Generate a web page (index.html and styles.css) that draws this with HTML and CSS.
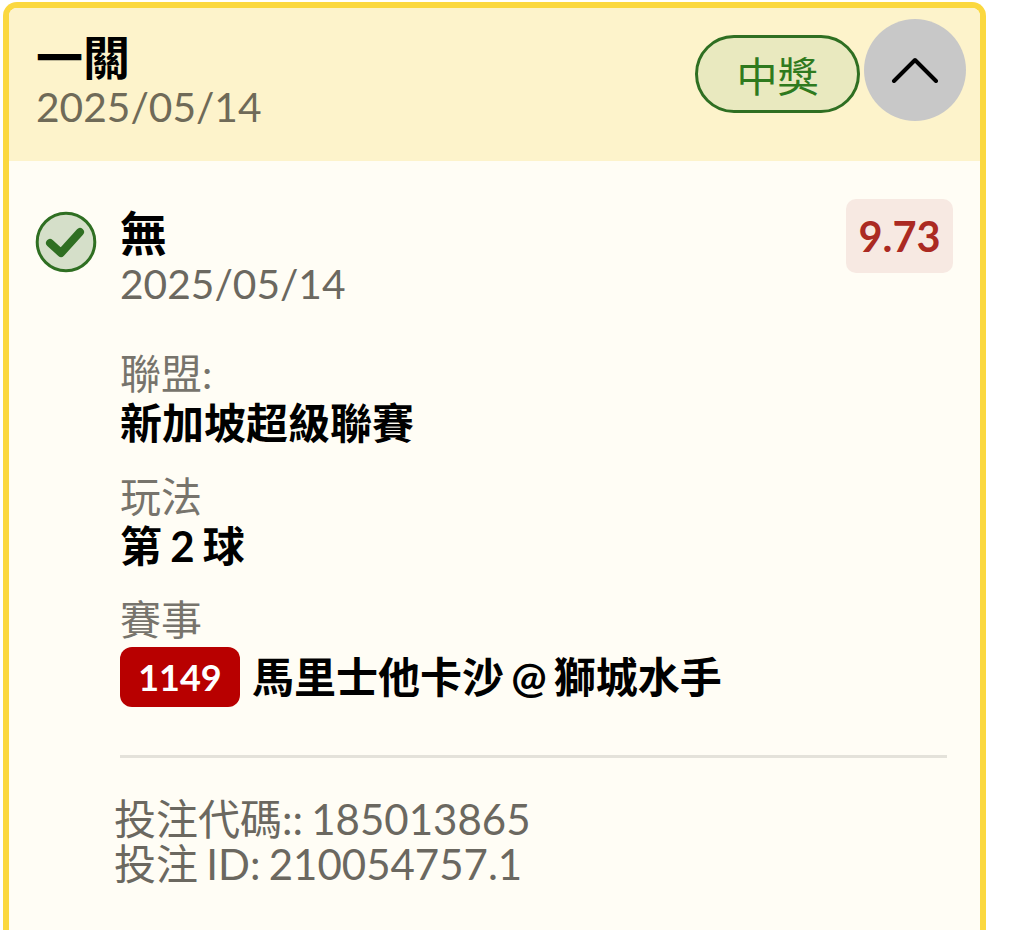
FILE: index.html
```html
<!DOCTYPE html>
<html lang="zh-Hant">
<head>
    <meta charset="UTF-8">
    <meta name="viewport" content="width=device-width, initial-scale=1.0">
    <title>一關</title>
    <link rel="stylesheet" href="styles.css">
</head>
<body>

    <div class="card">
        <div class="card-head">
            <div class="head-text">
                <div class="head-title">一關</div>
                <div class="head-date">2025/05/14</div>
            </div>
            <div class="head-actions">
                <span class="status">中獎</span>
                <button class="toggle" aria-label="收起">
                    <svg width="48" height="28" viewBox="0 0 48 28"><path d="M3 26 L24 5 L45 26" fill="none" stroke="#000" stroke-width="4" stroke-linecap="round" stroke-linejoin="round"/></svg>
                </button>
            </div>
        </div>

        <div class="card-body">
            <div class="pick">
                <svg class="check" width="62" height="62" viewBox="0 0 62 62">
                    <circle cx="31" cy="31" r="28.8" fill="#d5dfc9" stroke="#2f6f22" stroke-width="3"/>
                    <path d="M15 32 L26 42 L45 21" fill="none" stroke="#2f6f22" stroke-width="8" stroke-linecap="round" stroke-linejoin="round"/>
                </svg>
                <div class="pick-main">
                    <div class="pick-title">無</div>
                    <div class="pick-date">2025/05/14</div>

                    <div class="field first">
                        <div class="field-label">聯盟:</div>
                        <div class="field-value">新加坡超級聯賽</div>
                    </div>
                    <div class="field">
                        <div class="field-label">玩法</div>
                        <div class="field-value">第 2 球</div>
                    </div>
                    <div class="field">
                        <div class="field-label">賽事</div>
                        <div class="match">
                            <span class="match-no">1149</span>
                            <span class="field-value">馬里士他卡沙 @ 獅城水手</span>
                        </div>
                    </div>
                </div>
                <div class="odds">9.73</div>
            </div>

            <hr class="divider">

            <div class="codes">
                <div>投注代碼:: 185013865</div>
                <div>投注 ID: 210054757.1</div>
            </div>
        </div>
    </div>

</body>
</html>
```

FILE: styles.css
```css
html, body {
    height: 100%;
    overflow: hidden;
}
body {
    margin: 0;
    background: #fff;
    font-family: Lato, "Noto Sans CJK TC", sans-serif;
}
.card {
    box-sizing: border-box;
    width: 983px;
    height: 928px;
    margin: 2px 0 0 3px;
    border: 6px solid #fbd83f;
    border-bottom: none;
    border-radius: 14px 14px 0 0;
    background: #fffdf5;
    overflow: hidden;
}
.card-head {
    display: flex;
    justify-content: space-between;
    height: 153px;
    padding: 0 14px 0 27px;
    box-sizing: border-box;
    background: #fdf3cb;
}
.head-text {
    padding-top: 22px;
}
.head-title {
    font-size: 47px;
    font-weight: 700;
    line-height: 54px;
    color: #000;
}
.head-date {
    font-size: 40.7px;
    line-height: 46px;
    color: #6f6a58;
}
.head-actions {
    display: flex;
    align-items: flex-start;
    gap: 4px;
    padding-top: 12px;
}
.status {
    display: flex;
    align-items: center;
    justify-content: center;
    box-sizing: border-box;
    width: 165px;
    height: 78px;
    margin-top: 15px;
    border: 3px solid #2f6f22;
    border-radius: 39px;
    background: #e9e9bf;
    color: #2f7a1e;
    font-size: 41px;
}
.toggle {
    display: flex;
    align-items: center;
    justify-content: center;
    width: 102px;
    height: 102px;
    margin: -1px 0 0;
    padding: 0 0 2px;
    border: none;
    border-radius: 50%;
    background: #c8c8c8;
    cursor: pointer;
}
.card-body {
    padding: 38px 27px 0 26px;
}
.pick {
    display: flex;
    align-items: flex-start;
}
.check {
    flex: none;
    margin: 12px 23px 0 0;
}
.pick-main {
    flex: 1;
    padding-top: 7px;
}
.pick-title {
    font-size: 47px;
    font-weight: 700;
    line-height: 54px;
    color: #000;
}
.pick-date {
    font-size: 40.7px;
    line-height: 47px;
    color: #6b6860;
}
.field {
    margin-top: 24px;
}
.field.first {
    margin-top: 42px;
}
.field-label {
    font-size: 41px;
    line-height: 49px;
    color: #77746c;
}
.field-value {
    font-size: 42px;
    font-weight: 700;
    line-height: 50px;
    word-spacing: -2px;
    color: #000;
}
.match {
    display: flex;
    align-items: center;
    gap: 12px;
    margin-top: 3px;
}
.match .field-value {
    word-spacing: -3px;
}
.match-no {
    display: flex;
    align-items: center;
    justify-content: center;
    width: 120px;
    height: 60px;
    border-radius: 12px;
    background: #b80000;
    color: #fff;
    font-size: 36px;
    font-weight: 700;
}
.odds {
    display: flex;
    align-items: center;
    justify-content: center;
    flex: none;
    width: 107px;
    height: 74px;
    border-radius: 10px;
    background: #f7e9e2;
    color: #ab2a22;
    font-size: 41.5px;
    font-weight: 700;
}
.divider {
    height: 3px;
    margin: 48px 6px 0 85px;
    border: none;
    background: #e4e2da;
}
.codes {
    margin: 39px 0 0 79px;
    font-size: 42px;
    line-height: 45px;
    word-spacing: -2.5px;
    color: #6b6860;
}
```
